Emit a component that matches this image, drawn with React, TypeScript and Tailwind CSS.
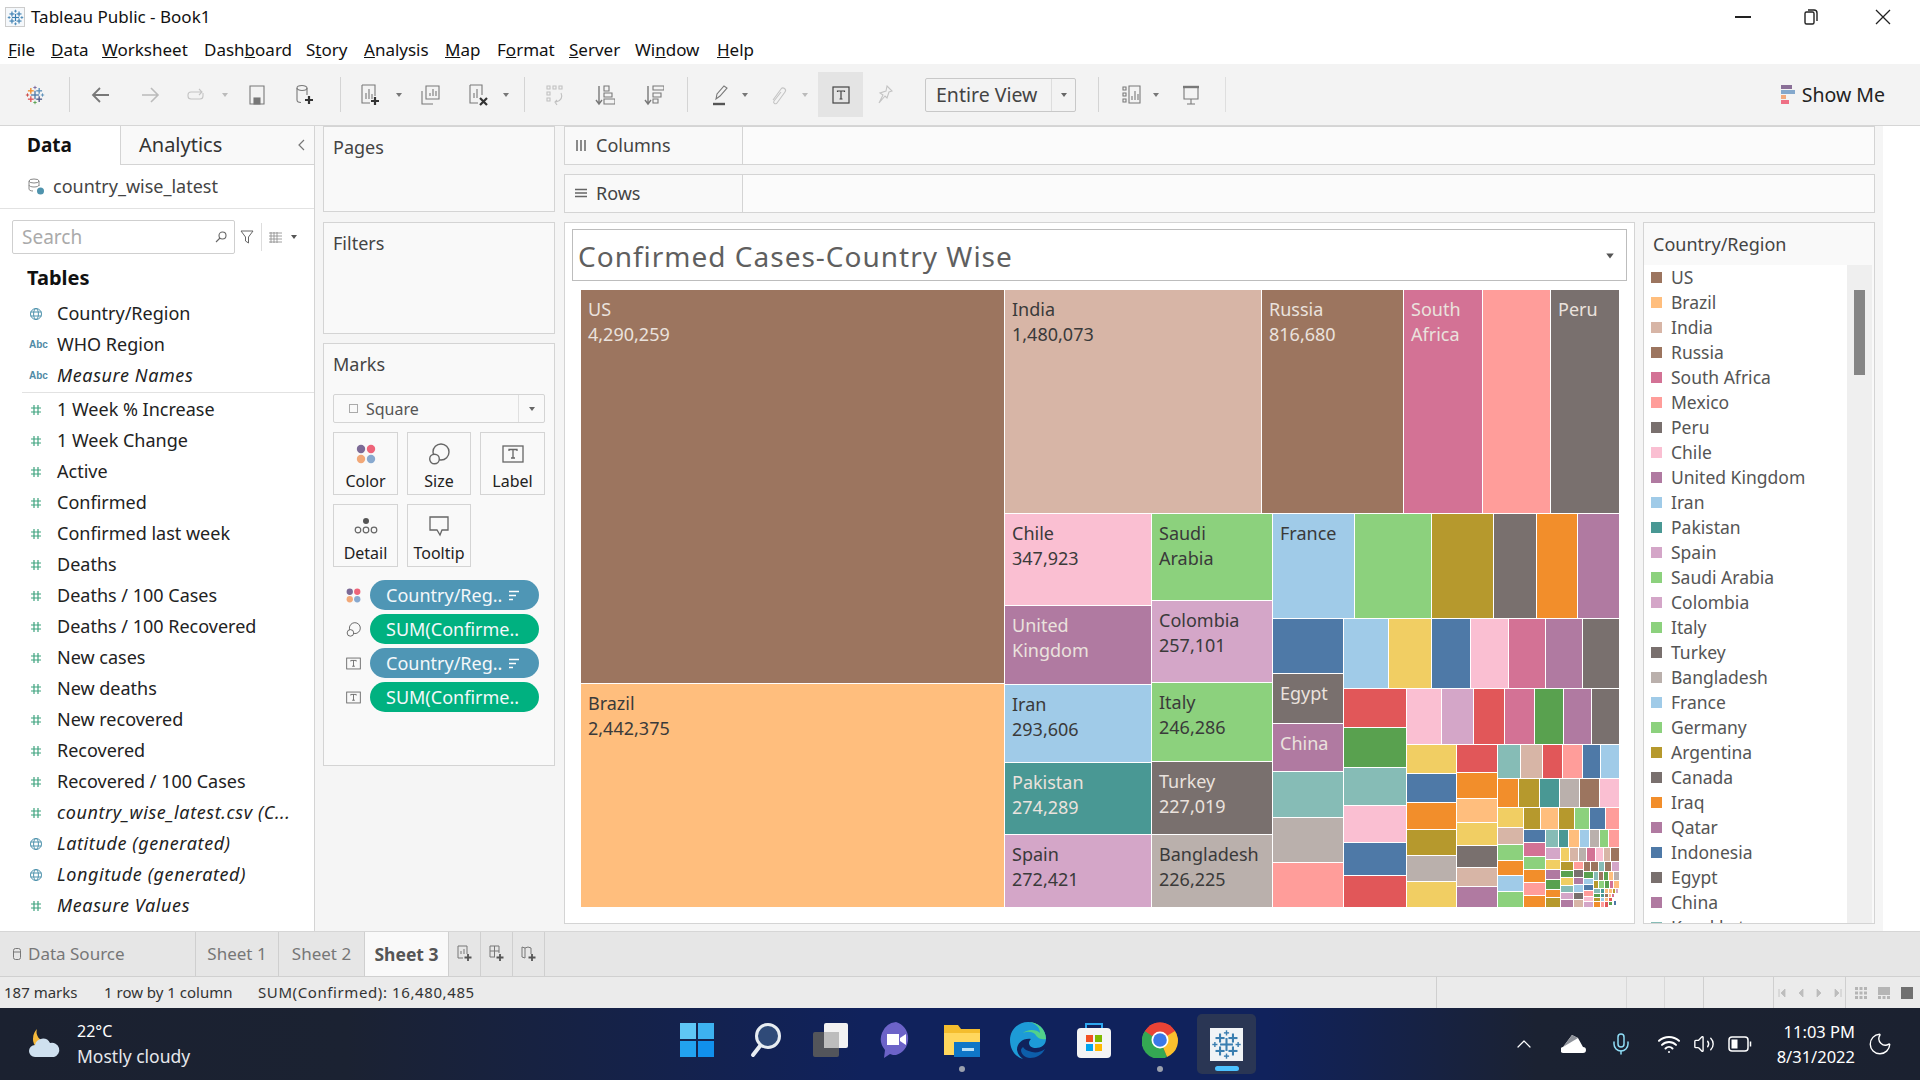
import React from "react";
import { ChevronUp, Mic, Wifi, Volume2, Moon } from "lucide-react";

const BR = "#9c755f", PE = "#ffbe7d", TA = "#d7b5a6", RO = "#d37295", SA = "#ff9d9a", GR = "#79706e", PI = "#fabfd2", PU = "#b07aa1", LB = "#a0cbe8", DT = "#499894", LP = "#d4a6c8", LG = "#8cd17d", OL = "#b6992d", OR = "#f28e2b", BL = "#4e79a7", TE = "#86bcb6", SI = "#bab0ac", RE = "#e15759", GN = "#59a14f", YE = "#f1ce63";

type Cell = [number, number, number, number, string, string?, string?, boolean?];
const cells: Cell[] = [
  [581, 290, 1004, 683, BR, "US", "4,290,259", true],
  [581, 684, 1004, 907, PE, "Brazil", "2,442,375"],
  [1005, 290, 1261, 513, TA, "India", "1,480,073"],
  [1262, 290, 1403, 513, BR, "Russia", "816,680", true],
  [1404, 290, 1482, 513, RO, "South", "Africa", true],
  [1483, 290, 1550, 513, SA],
  [1551, 290, 1619, 513, GR, "Peru", undefined, true],
  [1005, 514, 1151, 605, PI, "Chile", "347,923"],
  [1005, 606, 1151, 684, PU, "United", "Kingdom", true],
  [1005, 685, 1151, 762, LB, "Iran", "293,606"],
  [1005, 763, 1151, 834, DT, "Pakistan", "274,289", true],
  [1005, 835, 1151, 907, LP, "Spain", "272,421"],
  [1152, 514, 1272, 600, LG, "Saudi", "Arabia"],
  [1152, 601, 1272, 682, LP, "Colombia", "257,101"],
  [1152, 683, 1272, 761, LG, "Italy", "246,286"],
  [1152, 762, 1272, 834, GR, "Turkey", "227,019", true],
  [1152, 835, 1272, 907, SI, "Bangladesh", "226,225"],
  [1273, 514, 1354, 618, LB, "France"],
  [1355, 514, 1431, 618, LG],
  [1432, 514, 1493, 618, OL],
  [1494, 514, 1536, 618, GR],
  [1537, 514, 1577, 618, OR],
  [1578, 514, 1619, 618, PU],
  [1273, 619, 1343, 673, BL],
  [1273, 674, 1343, 723, GR, "Egypt", undefined, true],
  [1273, 724, 1343, 771, PU, "China", undefined, true],
  [1273, 772, 1343, 817, TE],
  [1273, 818, 1343, 862, SI],
  [1273, 863, 1343, 907, SA],
  [1344, 619, 1388, 688, LB],
  [1389, 619, 1431, 688, YE],
  [1432, 619, 1470, 688, BL],
  [1471, 619, 1508, 688, PI],
  [1509, 619, 1545, 688, RO],
  [1546, 619, 1582, 688, PU],
  [1583, 619, 1619, 688, GR],
  [1344, 689, 1406, 727, RE],
  [1344, 728, 1406, 767, GN],
  [1344, 768, 1406, 805, TE],
  [1344, 806, 1406, 842, PI],
  [1344, 843, 1406, 875, BL],
  [1344, 876, 1406, 907, RE],
  [1407, 689, 1441, 744, PI],
  [1442, 689, 1473, 744, LP],
  [1474, 689, 1504, 744, RE],
  [1505, 689, 1534, 744, RO],
  [1535, 689, 1563, 744, GN],
  [1564, 689, 1591, 744, PU],
  [1592, 689, 1619, 744, GR],
  [1407, 745, 1456, 773, YE],
  [1407, 774, 1456, 802, BL],
  [1407, 803, 1456, 829, OR],
  [1407, 830, 1456, 855, OL],
  [1407, 856, 1456, 881, SI],
  [1407, 882, 1456, 907, YE],
  [1457, 745, 1497, 772, RE],
  [1457, 773, 1497, 798, OR],
  [1457, 799, 1497, 822, PE],
  [1457, 823, 1497, 845, YE],
  [1457, 846, 1497, 867, GR],
  [1457, 868, 1497, 886, TA],
  [1457, 887, 1497, 907, PU],
  [1498, 745, 1520, 778, TE],
  [1521, 745, 1542, 778, TA],
  [1543, 745, 1562, 778, RE],
  [1563, 745, 1582, 778, SA],
  [1583, 745, 1600, 778, BL],
  [1601, 745, 1619, 778, LB],
  [1498, 779, 1518, 807, OR],
  [1519, 779, 1539, 807, OL],
  [1540, 779, 1559, 807, DT],
  [1560, 779, 1579, 807, SI],
  [1580, 779, 1599, 807, BR],
  [1600, 779, 1619, 807, PI],
  [1498, 808, 1523, 827, YE],
  [1498, 828, 1523, 844, TA],
  [1498, 845, 1523, 860, LG],
  [1498, 861, 1523, 875, OR],
  [1498, 876, 1523, 891, LB],
  [1498, 892, 1523, 907, LG],
  [1524, 808, 1540, 829, OL],
  [1541, 808, 1558, 829, PE],
  [1559, 808, 1574, 829, OL],
  [1575, 808, 1589, 829, LG],
  [1590, 808, 1605, 829, BL],
  [1606, 808, 1619, 829, SA],
  [1524, 830, 1545, 842, BL],
  [1524, 843, 1545, 856, RO],
  [1524, 857, 1545, 869, LG],
  [1524, 870, 1545, 882, OR],
  [1524, 883, 1545, 895, SA],
  [1524, 896, 1545, 907, OR],
  [1546, 830, 1558, 847, TE],
  [1559, 830, 1568, 847, DT],
  [1569, 830, 1579, 847, PE],
  [1580, 830, 1589, 847, LB],
  [1590, 830, 1599, 847, SI],
  [1600, 830, 1608, 847, LG],
  [1609, 830, 1619, 847, SA],
  [1546, 848, 1560, 859, LP],
  [1546, 860, 1560, 869, YE],
  [1546, 870, 1560, 879, PU],
  [1546, 880, 1560, 889, GN],
  [1546, 890, 1560, 897, OR],
  [1546, 898, 1560, 907, OL],
  [1561, 848, 1569, 861, YE],
  [1570, 848, 1578, 861, TA],
  [1579, 848, 1586, 861, SI],
  [1587, 848, 1595, 861, RO],
  [1596, 848, 1603, 861, PI],
  [1604, 848, 1610, 861, TA],
  [1611, 848, 1619, 861, BR],
  [1561, 862, 1573, 870, OL],
  [1561, 871, 1573, 877, GN],
  [1561, 878, 1573, 885, YE],
  [1561, 886, 1573, 892, TE],
  [1561, 893, 1573, 899, LP],
  [1561, 900, 1573, 907, PU],
  [1574, 862, 1583, 869, SA],
  [1574, 870, 1583, 877, GR],
  [1574, 878, 1583, 884, PU],
  [1574, 885, 1583, 892, LB],
  [1574, 893, 1583, 899, GR],
  [1574, 900, 1583, 907, TA],
  [1584, 862, 1590, 871, BR],
  [1591, 862, 1598, 871, BR],
  [1599, 862, 1604, 871, TE],
  [1605, 862, 1611, 871, BR],
  [1612, 862, 1619, 871, LP],
  [1584, 872, 1593, 878, GN],
  [1584, 879, 1593, 884, LB],
  [1584, 885, 1593, 890, BL],
  [1584, 891, 1593, 896, SA],
  [1584, 897, 1593, 901, PI],
  [1584, 902, 1593, 907, LP],
  [1594, 872, 1598, 880, TE],
  [1599, 872, 1603, 880, BR],
  [1604, 872, 1608, 880, GN],
  [1609, 872, 1613, 880, PE],
  [1614, 872, 1619, 880, SI],
  [1594, 881, 1598, 888, OL],
  [1599, 881, 1604, 888, LG],
  [1605, 881, 1609, 888, GN],
  [1610, 881, 1613, 888, RO],
  [1614, 881, 1619, 888, PE],
  [1594, 889, 1600, 893, TE],
  [1601, 889, 1604, 893, DT],
  [1605, 889, 1608, 893, PE],
  [1609, 889, 1612, 893, PE],
  [1613, 889, 1615, 893, OL],
  [1616, 889, 1618, 893, LP],
  [1594, 894, 1600, 897, GN],
  [1601, 894, 1604, 897, DT],
  [1605, 894, 1608, 897, BR],
  [1609, 894, 1611, 897, PE],
  [1612, 894, 1614, 897, RO],
  [1594, 898, 1600, 901, OL],
  [1601, 898, 1604, 901, LB],
  [1605, 898, 1608, 901, PE],
  [1609, 898, 1612, 901, RE],
  [1594, 902, 1600, 907, OR],
  [1601, 902, 1604, 907, SA],
  [1605, 902, 1608, 907, RE],
  [1609, 902, 1612, 905, GN],
  [1614, 901, 1616, 905, BL],
];

function Treemap() {
  return (
    <svg viewBox="581 290 1038 617" className="block h-[617px] w-[1038px] shrink-0">
      {cells.map((c, i) => (
        <g key={i}>
          <rect x={c[0]} y={c[1]} width={c[2] - c[0]} height={c[3] - c[1]} fill={c[4]} />
          {c[5] && (
            <text x={c[0] + 7} y={c[1] + 26} fontSize="18" fill={c[7] ? "#eae2dd" : "#3a3a3a"}>
              {c[5]}
            </text>
          )}
          {c[6] && (
            <text x={c[0] + 7} y={c[1] + 51} fontSize="18" fill={c[7] ? "#eae2dd" : "#3a3a3a"}>
              {c[6]}
            </text>
          )}
        </g>
      ))}
    </svg>
  );
}

function TableauMark({ size = 22, mono }: { size?: number; mono?: boolean }) {
  const colors = mono
    ? ["#3a7eb0", "#3a7eb0", "#3a7eb0", "#3a7eb0", "#3a7eb0", "#3a7eb0", "#3a7eb0"]
    : ["#f28e2b", "#5b8fb9", "#e15759", "#4e5a8a", "#7b6aa0", "#59a14f", "#c9453f"];
  const pts: [number, number, number, string][] = [
    [12, 12, 5, mono ? colors[0] : "#4e79a7"],
    [7, 7, 3.5, colors[0]],
    [17, 7, 3.5, colors[1]],
    [7, 17, 3.5, colors[2]],
    [17, 17, 3.5, colors[3]],
    [12, 3, 2, colors[4]],
    [12, 21, 2, colors[5]],
    [3, 12, 2, colors[6]],
    [21, 12, 2, colors[1]],
  ];
  return (
    <svg width={size} height={size} viewBox="0 0 24 24">
      {pts.map(([x, y, r, col], i) => (
        <g key={i} stroke={col} strokeWidth={r > 3 ? 1.6 : 1.1}>
          <line x1={x - r} y1={y} x2={x + r} y2={y} />
          <line x1={x} y1={y - r} x2={x} y2={y + r} />
        </g>
      ))}
    </svg>
  );
}

function Caret({ c = "#777", cls = "" }: { c?: string; cls?: string }) {
  return (
    <svg width="8" height="6" viewBox="0 0 8 6" className={`shrink-0 ${cls}`}>
      <path d="M1 1h6L4 5z" fill={c} />
    </svg>
  );
}

const Sep = ({ cls }: { cls: string }) => <div className={`h-[35px] w-px shrink-0 bg-[#d4d4d4] ${cls}`} />;

function I({ cls, children }: { cls: string; children: React.ReactNode }) {
  return (
    <svg width="20" height="22" viewBox="0 0 20 22" fill="none" stroke="#787878" strokeWidth="1.1" className={`shrink-0 ${cls}`}>
      {children}
    </svg>
  );
}

const menu: [string, string, string, string][] = [
  ["", "F", "ile", "w-[43px]"],
  ["", "D", "ata", "w-[51px]"],
  ["", "W", "orksheet", "w-[102px]"],
  ["Dash", "b", "oard", "w-[102px]"],
  ["S", "t", "ory", "w-[58px]"],
  ["", "A", "nalysis", "w-[81px]"],
  ["", "M", "ap", "w-[52px]"],
  ["F", "o", "rmat", "w-[72px]"],
  ["", "S", "erver", "w-[66px]"],
  ["Wi", "n", "dow", "w-[82px]"],
  ["", "H", "elp", "w-[50px]"],
];

function TitleBar() {
  return (
    <div className="flex h-[34px] shrink-0 items-center bg-white pl-[5px] text-[17px] text-[#111]">
      <div className="flex h-[20px] w-[20px] shrink-0 items-center justify-center border border-[#ccc] bg-[#f5f8fb]">
        <TableauMark size={17} mono />
      </div>
      <span className="ml-[6px]">Tableau Public - Book1</span>
      <div className="ml-auto flex items-center">
        <div className="h-[1.5px] w-[16px] bg-[#222]" />
        <svg width="16" height="18" viewBox="0 0 16 18" fill="none" stroke="#222" strokeWidth="1.4" className="ml-[52px]">
          <rect x="2" y="4" width="9" height="12" rx="1.5" />
          <path d="M5 2h6a3 3 0 0 1 3 3v8" />
        </svg>
        <svg width="16" height="16" viewBox="0 0 16 16" stroke="#222" strokeWidth="1.3" className="ml-[56px] mr-[29px]">
          <path d="M1 1l14 14M15 1L1 15" />
        </svg>
      </div>
    </div>
  );
}

function MenuBar() {
  return (
    <div className="flex h-[30px] shrink-0 items-center bg-white pl-[8px] pt-[2px] text-[17px] text-[#111]">
      {menu.map(([a, b, c, w]) => (
        <span key={a + b + c} className={`shrink-0 ${w}`}>
          {a}
          <span className="underline">{b}</span>
          {c}
        </span>
      ))}
    </div>
  );
}

function Toolbar() {
  return (
    <div className="flex h-[61px] shrink-0 items-center bg-[#f3f3f3]">
      <div className="ml-[25px] shrink-0">
        <TableauMark size={20} />
      </div>
      <Sep cls="ml-[24px]" />
      <I cls="ml-[21px]"><path d="M18 11H3M9 4l-7 7 7 7" strokeWidth="1.8" /></I>
      <I cls="ml-[29px]"><path d="M2 11h15M11 4l7 7-7 7" stroke="#bbb" strokeWidth="1.6" /></I>
      <I cls="ml-[26px]"><path d="M17 9v3a3 3 0 0 1-3 3H5a3 3 0 0 1-3-3v-1a3 3 0 0 1 3-3h11M13 5l3 3-3 3" stroke="#c4c4c4" /></I>
      <Caret c="#bbb" cls="ml-[15px]" />
      <I cls="ml-[18px]"><path d="M3 2h14v18H3z" /><rect x="7" y="14" width="6" height="6" fill="#777" /></I>
      <I cls="ml-[28px]"><ellipse cx="7" cy="4" rx="5" ry="2.5" /><path d="M2 4v12c0 1.5 2 2.5 4 2.5M12 4v7" /><path d="M14 12v8M10 16h8" stroke="#333" strokeWidth="2.2" /></I>
      <Sep cls="ml-[25px]" />
      <I cls="ml-[19px]"><path d="M2 1h13v11M2 1v18h8" /><path d="M6 15V9M9 15V5M12 15v-5" /><path d="M15 13v8M11 17h8" stroke="#333" strokeWidth="2.2" /></I>
      <Caret cls="ml-[15px]" />
      <I cls="ml-[17px]"><path d="M6 2h13v13H6z" /><path d="M2 7v13h11" /><path d="M10 12V9M13 12V5M16 12V7" /></I>
      <I cls="ml-[28px]"><path d="M2 1h12v10M2 1v18h8" /><path d="M6 14V9M9 14V5" /><path d="M12 14l7 7M19 14l-7 7" stroke="#333" strokeWidth="2.2" /></I>
      <Caret cls="ml-[14px]" />
      <Sep cls="ml-[14px]" />
      <I cls="ml-[20px]"><g stroke="#c0c0c0"><path d="M2 2h3v3H2zM8 2h3v3H8zM14 2h3v3h-3zM2 8h3v3H2zM2 14h3v3H2zM16 9c2 4 0 8-5 9M12 16l-2 2 2 3" /></g></I>
      <I cls="ml-[30px]"><path d="M4 2v17M1 16l3 4 3-4" strokeWidth="1.4" /><path d="M9 2h5v5H9zM9 9h8v4H9zM9 15h11v5H9z" /></I>
      <I cls="ml-[29px]"><path d="M4 2v17M1 16l3 4 3-4" strokeWidth="1.4" /><path d="M9 2h11v4H9zM9 9h8v4H9zM9 15h5v4H9z" /></I>
      <Sep cls="ml-[23px]" />
      <I cls="ml-[22px]"><path d="M6 15l1-5 7-8 3 2-7 8z" /><path d="M3 20h12" stroke="#555" strokeWidth="2.4" /></I>
      <Caret cls="ml-[11px]" />
      <I cls="ml-[19px]"><path d="M5 16l8-11a2.5 2.5 0 0 1 4 3L9 19a1.6 1.6 0 0 1-3-2l7-9" stroke="#c4c4c4" /></I>
      <Caret c="#bbb" cls="ml-[13px]" />
      <div className="ml-[9px] flex h-[45px] w-[45px] shrink-0 items-center justify-center bg-[#e4e4e4]">
        <svg width="18" height="18" viewBox="0 0 18 18" fill="none" stroke="#444" strokeWidth="1.2">
          <rect x="1" y="1" width="16" height="16" />
          <path d="M5.5 6V5h7v1M9 5v8M7.5 13h3" />
        </svg>
      </div>
      <I cls="ml-[12px]"><path d="M12 2l5 5-3 1-2 6-2-2-6 7 4-8-3-2 6-2z" stroke="#c4c4c4" /></I>
      <div className="ml-[30px] flex h-[34px] w-[151px] shrink-0 items-center rounded-[2px] border border-[#c8c8c8] text-[19.5px] text-[#444]">
        <span className="w-[125px] pl-[10px]">Entire View</span>
        <div className="flex h-full flex-1 items-center justify-center border-l border-[#ddd]">
          <Caret c="#666" />
        </div>
      </div>
      <Sep cls="ml-[22px]" />
      <I cls="ml-[22px]"><path d="M2 3h3v3H2zM2 9h3v3H2zM2 15h3v3H2zM8 2h11v17H8z" /><path d="M11 16v-4M14 16V7M17 16v-6" /></I>
      <Caret cls="ml-[11px]" />
      <I cls="ml-[21px]"><path d="M3 3h14v12H3zM10 15v5M6 20h8" /><path d="M2 3h16" strokeWidth="2.4" /></I>
      <Sep cls="ml-[24px] bg-[#dedede]" />
      <div className="ml-auto mr-[35px] flex items-center text-[19.5px] text-[#222]">
        <div className="mr-[7px] flex w-[14px] flex-col">
          <div className="h-[4px] w-[11px] bg-[#8a6f97]" />
          <div className="mt-px h-[4px] w-[14px] bg-[#84a8cc]" />
          <div className="mt-px h-[4px] w-[5px] bg-[#f3a97c]" />
          <div className="mt-px h-[4px] w-[8px] bg-[#ee6f84]" />
        </div>
        Show Me
      </div>
    </div>
  );
}

function Globe() {
  return (
    <svg width="14" height="14" viewBox="0 0 14 14" fill="none" stroke="#4f93ad" strokeWidth="1" className="shrink-0">
      <circle cx="7" cy="7" r="5.5" />
      <ellipse cx="7" cy="7" rx="2.4" ry="5.5" />
      <path d="M1.5 5h11M1.5 9h11" />
    </svg>
  );
}
function Abc() {
  return <span className="w-[20px] shrink-0 text-[10px] font-bold text-[#4f8aa5] font-['Liberation_Sans',sans-serif]">Abc</span>;
}
function Hash() {
  return (
    <svg width="14" height="14" viewBox="0 0 14 14" stroke="#3fa37f" strokeWidth="1.2" className="shrink-0">
      <path d="M5 2v10M9 2v10M2 5h10M2 9h10" />
    </svg>
  );
}

type F = [string, "g" | "a" | "h", boolean?];
const dims: F[] = [
  ["Country/Region", "g"],
  ["WHO Region", "a"],
  ["Measure Names", "a", true],
];
const measures: F[] = [
  ["1 Week % Increase", "h"],
  ["1 Week Change", "h"],
  ["Active", "h"],
  ["Confirmed", "h"],
  ["Confirmed last week", "h"],
  ["Deaths", "h"],
  ["Deaths / 100 Cases", "h"],
  ["Deaths / 100 Recovered", "h"],
  ["New cases", "h"],
  ["New deaths", "h"],
  ["New recovered", "h"],
  ["Recovered", "h"],
  ["Recovered / 100 Cases", "h"],
  ["country_wise_latest.csv (C...", "h", true],
  ["Latitude (generated)", "g", true],
  ["Longitude (generated)", "g", true],
  ["Measure Values", "h", true],
];

function Field({ f }: { f: F }) {
  return (
    <div className="flex h-[31px] items-center pl-[29px] text-[18px] text-[#222]">
      <div className="flex w-[28px] shrink-0 items-center">
        {f[1] === "g" ? <Globe /> : f[1] === "a" ? <Abc /> : <Hash />}
      </div>
      <span className={f[2] ? "italic tracking-[0.6px]" : ""}>{f[0]}</span>
    </div>
  );
}

function DataPanel() {
  return (
    <aside className="flex w-[315px] shrink-0 flex-col overflow-hidden border-r border-[#d4d4d4] bg-white">
      <div className="flex h-[39px] shrink-0 items-center">
        <div className="w-[120px] pl-[27px] text-[19px] font-bold text-[#111]">Data</div>
        <div className="flex h-full flex-1 items-center border-b border-l border-[#d4d4d4] bg-[#f9f9f9] pl-[18px] text-[20px] text-[#333]">
          Analytics
          <svg width="8" height="12" viewBox="0 0 8 12" fill="none" stroke="#777" strokeWidth="1.2" className="ml-auto mr-[9px]">
            <path d="M7 1L2 6l5 5" />
          </svg>
        </div>
      </div>
      <div className="flex h-[44px] shrink-0 items-center border-b border-[#e2e2e2] pl-[28px] text-[18px] text-[#444]">
        <svg width="17" height="18" viewBox="0 0 17 18" fill="none" stroke="#888" strokeWidth="1" className="mr-[8px]">
          <ellipse cx="6" cy="3" rx="5" ry="2" />
          <path d="M1 3v8c0 1 1.500 2 4 2M11 3v5M1 7c0 1 2 2 5 2s5-1 5-2" />
          <circle cx="12.500" cy="13" r="3.500" fill="#4f93ad" stroke="none" />
        </svg>
        country_wise_latest
      </div>
      <div className="mt-[11px] flex shrink-0 items-center pl-[12px]">
        <div className="flex h-[34px] w-[223px] items-center rounded-[2px] border border-[#cfcfcf] pl-[9px] pr-[7px] text-[19px] text-[#aaa]">
          Search
          <svg width="12" height="12" viewBox="0 0 12 12" fill="none" stroke="#666" strokeWidth="1.1" className="ml-auto">
            <circle cx="7.500" cy="4.500" r="3.500" />
            <path d="M5 7l-4 4" />
          </svg>
        </div>
        <svg width="14" height="14" viewBox="0 0 14 14" fill="none" stroke="#666" strokeWidth="1" className="ml-[5px]">
          <path d="M1 1h12L8.500 7v6l-3-2V7z" />
        </svg>
        <div className="ml-[7px] h-[28px] w-px bg-[#ddd]" />
        <svg width="13" height="11" viewBox="0 0 13 11" stroke="#888" strokeWidth="0.8" className="ml-[7px]">
          <path d="M0 1h13M0 4h13M0 7h13M0 10h13M2 0v11M5 0v11M8 0v11" />
        </svg>
        <Caret c="#555" cls="ml-[8px]" />
      </div>
      <div className="mt-[8px] flex h-[32px] shrink-0 items-center pl-[27px] text-[20px] font-bold text-[#111]">Tables</div>
      <div className="mt-[4px] ml-[22px] shrink-0 border-b border-[#e2e2e2] pb-[1px] [&>div]:-ml-[22px]">
        {dims.map((f) => <Field key={f[0]} f={f} />)}
      </div>
      <div className="mt-[1px] shrink-0">
        {measures.map((f) => <Field key={f[0]} f={f} />)}
      </div>
    </aside>
  );
}

function Dots({ s = 20 }: { s?: number }) {
  return (
    <svg width={s} height={s} viewBox="0 0 20 20">
      <circle cx="5" cy="5" r="4.200" fill="#7c6a96" />
      <circle cx="15" cy="5" r="4.200" fill="#ee6479" />
      <circle cx="5" cy="15" r="4.200" fill="#f2a878" />
      <circle cx="15" cy="15" r="4.200" fill="#88a9cf" />
    </svg>
  );
}
function SizeI({ s = 22 }: { s?: number }) {
  return (
    <svg width={s} height={s} viewBox="0 0 22 22" fill="none" stroke="#666" strokeWidth="1.4">
      <circle cx="13" cy="9" r="8" />
      <circle cx="6.500" cy="16" r="4.800" fill="#f9f9f9" />
    </svg>
  );
}
function TBox({ s = 22 }: { s?: number }) {
  return (
    <svg width={s} height={s} viewBox="0 0 22 22" fill="none" stroke="#666" strokeWidth="1.3">
      <rect x="1" y="3" width="20" height="16" />
      <path d="M7 8V6.500h8V8M11 6.500V15M9 15h4" />
    </svg>
  );
}

function MarkCard({ label, w, children }: { label: string; w: string; children: React.ReactNode }) {
  return (
    <div className={`flex h-[63px] flex-col items-center justify-between border border-[#d4d4d4] pb-[1px] pt-[9px] text-[16px] text-[#222] ${w}`}>
      <div className="flex h-[24px] items-center">{children}</div>
      <span>{label}</span>
    </div>
  );
}

function Pill({ text, c, sort, icon }: { text: string; c: string; sort?: boolean; icon: React.ReactNode }) {
  return (
    <div className="flex h-[30px] items-center">
      <div className="flex w-[37px] shrink-0 items-center justify-center pl-[3px]">{icon}</div>
      <div className={`flex h-[30px] w-[169px] items-center overflow-hidden whitespace-nowrap rounded-full pl-[16px] text-[18px] text-[#f4f8fa] ${c}`}>
        {text}
        {sort && (
          <svg width="12" height="11" viewBox="0 0 12 11" stroke="#fff" strokeWidth="1.500" className="ml-[6px] shrink-0">
            <path d="M1 1.500h10M1 5.500h7M1 9.500h4" />
          </svg>
        )}
      </div>
    </div>
  );
}

function Shelves() {
  return (
    <div className="ml-[8px] flex w-[232px] shrink-0 flex-col text-[18px] text-[#444]">
      <div className="h-[86px] shrink-0 border border-[#d4d4d4] bg-[#f9f9f9] pl-[9px] pt-[7px]">Pages</div>
      <div className="mt-[10px] h-[112px] shrink-0 border border-[#d4d4d4] bg-[#f9f9f9] pl-[9px] pt-[7px]">Filters</div>
      <div className="mt-[9px] flex h-[423px] shrink-0 flex-col border border-[#d4d4d4] bg-[#f9f9f9] px-[9px] pt-[7px]">
        <div>Marks</div>
        <div className="mt-[16px] flex h-[29px] items-center rounded-[2px] border border-[#d4d4d4] text-[16px] text-[#555]">
          <div className="flex h-full flex-1 items-center pl-[15px]">
            <div className="mr-[8px] h-[9px] w-[9px] border border-[#aaa]" />
            Square
          </div>
          <div className="flex h-full w-[26px] items-center justify-center border-l border-[#e0e0e0]">
            <Caret c="#666" />
          </div>
        </div>
        <div className="mt-[9px] flex gap-[9px]">
          <MarkCard label="Color" w="w-[65px]"><Dots /></MarkCard>
          <MarkCard label="Size" w="w-[64px]"><SizeI /></MarkCard>
          <MarkCard label="Label" w="w-[65px]"><TBox /></MarkCard>
        </div>
        <div className="mt-[9px] flex gap-[9px]">
          <MarkCard label="Detail" w="w-[65px]">
            <svg width="24" height="20" viewBox="0 0 24 20" fill="none" stroke="#666" strokeWidth="1.200">
              <circle cx="12" cy="5" r="3" fill="#555" stroke="none" />
              <circle cx="4" cy="14" r="2.800" />
              <circle cx="12" cy="14" r="2.800" />
              <circle cx="20" cy="14" r="2.800" />
            </svg>
          </MarkCard>
          <MarkCard label="Tooltip" w="w-[64px]">
            <svg width="22" height="22" viewBox="0 0 22 22" fill="none" stroke="#666" strokeWidth="1.300">
              <path d="M2 2h18v13h-6l-2 5-3-5H2z" />
            </svg>
          </MarkCard>
        </div>
        <div className="mt-[13px] flex flex-col gap-[4px]">
          <Pill text="Country/Reg.." c="bg-[#4f96b5]" sort icon={<Dots s={15} />} />
          <Pill text="SUM(Confirme.." c="bg-[#00b180]" icon={<SizeI s={15} />} />
          <Pill text="Country/Reg.." c="bg-[#4f96b5]" sort icon={<TBox s={15} />} />
          <Pill text="SUM(Confirme.." c="bg-[#00b180]" icon={<TBox s={15} />} />
        </div>
      </div>
    </div>
  );
}

const legend: [string, string][] = [
  ["US", BR], ["Brazil", PE], ["India", TA], ["Russia", BR], ["South Africa", RO], ["Mexico", SA], ["Peru", GR], ["Chile", PI], ["United Kingdom", PU], ["Iran", LB], ["Pakistan", DT], ["Spain", LP], ["Saudi Arabia", LG], ["Colombia", LP], ["Italy", LG], ["Turkey", GR], ["Bangladesh", SI], ["France", LB], ["Germany", LG], ["Argentina", OL], ["Canada", GR], ["Iraq", OR], ["Qatar", PU], ["Indonesia", BL], ["Egypt", GR], ["China", PU], ["Kazakhstan", TE],
];

function Shelf({ name, icon }: { name: string; icon: React.ReactNode }) {
  return (
    <div className="flex h-[39px] shrink-0 border border-[#d4d4d4] bg-[#fbfbfb]">
      <div className="flex w-[178px] items-center border-r border-[#d4d4d4] bg-[#f9f9f9] pb-[1px] pl-[10px] text-[18px] text-[#444]">
        <div className="mr-[9px] w-[12px]">{icon}</div>
        {name}
      </div>
    </div>
  );
}

function MainArea() {
  return (
    <div className="ml-[9px] flex w-[1311px] shrink-0 flex-col">
      <Shelf name="Columns" icon={<svg width="12" height="11" viewBox="0 0 12 11" stroke="#666" strokeWidth="1.500"><path d="M2 0v11M6 0v11M10 0v11" /></svg>} />
      <div className="mt-[9px]">
        <Shelf name="Rows" icon={<svg width="12" height="10" viewBox="0 0 12 10" stroke="#666" strokeWidth="1.500"><path d="M0 1.500h12M0 5h12M0 8.500h12" /></svg>} />
      </div>
      <div className="mt-[9px] flex h-[702px] shrink-0 gap-[8px]">
        <div className="flex w-[1071px] shrink-0 flex-col border border-[#d4d4d4] bg-white px-[7px] pt-[6px]">
          <div className="flex h-[52px] shrink-0 items-center border border-[#bdbdbd] pl-[5px] pr-[12px] pt-[2px] text-[28px] tracking-[1px] text-[#5f5f5f]">
            Confirmed Cases-Country Wise
            <Caret c="#555" cls="ml-auto scale-125" />
          </div>
          <div className="ml-[9px] mt-[9px]">
            <Treemap />
          </div>
        </div>
        <div className="flex w-[232px] shrink-0 flex-col overflow-hidden border border-[#d4d4d4] bg-[#f9f9f9]">
          <div className="flex h-[42px] shrink-0 items-center pl-[9px] text-[18px] text-[#444]">Country/Region</div>
          <div className="flex min-h-0 flex-1">
            <div className="w-[203px] shrink-0 overflow-hidden bg-white pl-[7px]">
              {legend.map(([n, c]) => (
                <div key={n} className="flex h-[25px] items-center text-[17.5px] text-[#555]">
                  <div className="mr-[9px] h-[11px] w-[11px] shrink-0" style={{ backgroundColor: c }} />
                  {n}
                </div>
              ))}
            </div>
            <div className="w-[25px] shrink-0 bg-[#efefef] pl-[7px] pt-[25px]">
              <div className="h-[85px] w-[11px] bg-[#858585]" />
            </div>
          </div>
        </div>
      </div>
    </div>
  );
}

function SheetTabs() {
  return (
    <div className="flex h-[45px] shrink-0 border-b border-[#d0d0d0] bg-[#e6e6e6] text-[17px] text-[#777]">
      <div className="flex w-[196px] items-center border-r border-[#cfcfcf] pl-[13px]">
        <svg width="8" height="12" viewBox="0 0 8 12" fill="none" stroke="#777" className="mr-[7px]">
          <rect x="0.500" y="0.500" width="7" height="11" rx="2" />
          <path d="M0.500 4h7" />
        </svg>
        Data Source
      </div>
      <div className="flex w-[83px] items-center justify-center border-r border-[#cfcfcf]">Sheet 1</div>
      <div className="flex w-[85px] items-center justify-center">Sheet 2</div>
      <div className="flex w-[85px] items-center justify-center border-x border-[#cfcfcf] bg-[#f9f9f9] text-[17.5px] font-bold text-[#555]">Sheet 3</div>
      {[0, 1, 2].map((k) => (
        <div key={k} className="flex w-[32px] items-center justify-center border-r border-[#cfcfcf]">
          <svg width="16" height="18" viewBox="0 0 16 18" fill="none" stroke="#777" strokeWidth="1">
            {k === 0 && <path d="M1 1h9v8M1 1v12h5M4 9V6M7 9V4" />}
            {k === 1 && <path d="M1 1h9v7M1 1v11h5M1 6h9M5.500 1v11" />}
            {k === 2 && <path d="M1 2l3 1 3-1 3 1v6M1 2v10l3 1M4 3v10" />}
            <path d="M11 9v7M7.500 12.500h7" stroke="#555" strokeWidth="1.800" />
          </svg>
        </div>
      ))}
    </div>
  );
}

function StatusBar() {
  return (
    <div className="flex h-[31px] shrink-0 items-center bg-[#ebebeb] text-[15px] text-[#333]">
      <span className="w-[104px] shrink-0 pl-[4px]">187 marks</span>
      <span className="w-[154px] shrink-0">1 row by 1 column</span>
      <span className="w-[1178px] shrink-0 tracking-[0.6px]">SUM(Confirmed): 16,480,485</span>
      <div className="h-full w-[190px] shrink-0 border-l border-[#cfcfcf]" />
      <div className="h-full w-[38px] shrink-0 border-l border-[#d8d8d8]" />
      <div className="h-full w-[39px] shrink-0 border-l border-[#d8d8d8]" />
      <div className="h-full w-[70px] shrink-0 border-l border-[#cfcfcf]" />
      <div className="flex h-full w-[72px] shrink-0 items-center justify-center gap-[8px] border-l border-[#cfcfcf]">
        {["M1 1v8M7 1L3 5l4 4z", "M7 1L3 5l4 4z", "M3 1l4 4-4 4z", "M3 1l4 4-4 4zM9 1v8"].map((d) => (
          <svg key={d} width="10" height="10" viewBox="0 0 10 10" fill="#bdbdbd" stroke="#bdbdbd" strokeWidth="0.800"><path d={d} /></svg>
        ))}
      </div>
      <div className="flex h-full flex-1 items-center gap-[11px] border-l border-[#cfcfcf] pl-[9px]">
        <svg width="12" height="12" viewBox="0 0 12 12" fill="#b5b5b5"><path d="M0 0h3v3H0zM4.500 0h3v3h-3zM9 0h3v3H9zM0 4.500h3v3H0zM4.500 4.500h3v3h-3zM9 4.500h3v3H9zM0 9h3v3H0zM4.500 9h3v3h-3zM9 9h3v3H9z" /></svg>
        <svg width="12" height="12" viewBox="0 0 12 12" fill="#b5b5b5"><path d="M0 0h12v8H0zM0 9h3v3H0zM4.500 9h3v3h-3zM9 9h3v3H9z" /></svg>
        <svg width="12" height="12" viewBox="0 0 12 12" fill="#707070"><path d="M0 0h12v12H0z" /></svg>
      </div>
    </div>
  );
}

function Task({ cls, dot, children }: { cls: string; dot?: boolean; children: React.ReactNode }) {
  return (
    <div className={`flex h-[72px] w-[66px] shrink-0 flex-col items-center pt-[14px] ${cls}`}>
      <div className="flex h-[36px] items-center justify-center">{children}</div>
      {dot && <div className="mt-[8px] h-[6px] w-[6px] rounded-full bg-[#9aa0ad]" />}
    </div>
  );
}

function Taskbar() {
  return (
    <div className="flex h-[72px] shrink-0 items-center bg-[linear-gradient(90deg,#1b2130_0%,#1b2232_18%,#10225c_45%,#10225c_66%,#1b2232_80%,#1b2130_100%)] text-white">
      <svg width="34" height="34" viewBox="0 0 34 34" className="ml-[29px] shrink-0">
        <path d="M8 2a9 9 0 0 0 9 12 9 9 0 0 1-9 6 9 9 0 0 1-4-8c0-5 2-8 4-10z" fill="#f6b93b" />
        <path d="M6 30a6 6 0 0 1 0-12 8 8 0 0 1 15-2 7 7 0 0 1 4 14z" fill="#cfe0ef" />
      </svg>
      <div className="ml-[14px] w-[200px] shrink-0 text-[#e6e8ec]">
        <div className="text-[16px] leading-[25px] text-white">22°C</div>
        <div className="text-[17.5px] leading-[25px]">Mostly cloudy</div>
      </div>
      <Task cls="ml-[387px]">
        <svg width="36" height="36" viewBox="0 0 36 36">
          <path d="M1 1h16v16H1z" fill="#5fc6f5" /><path d="M19 1h16v16H19z" fill="#3db2f0" /><path d="M1 19h16v16H1z" fill="#22a2ef" /><path d="M19 19h16v16H19z" fill="#1190ec" />
        </svg>
      </Task>
      <Task cls="ml-[2px]">
        <svg width="34" height="36" viewBox="0 0 34 36" fill="#2f4a78" stroke="#e8edf2" strokeWidth="3">
          <circle cx="20" cy="14" r="11.500" />
          <path d="M12 24L5 33" fill="none" strokeLinecap="round" strokeWidth="4" />
        </svg>
      </Task>
      <Task cls="">
        <svg width="38" height="36" viewBox="0 0 38 36">
          <rect x="12" y="1" width="24" height="25" rx="2" fill="#f2f2f2" />
          <rect x="1" y="10" width="26" height="25" rx="2" fill="#5b5b5b" fillOpacity="0.9" />
          <rect x="12" y="10" width="15" height="16" fill="#bdbdbd" />
        </svg>
      </Task>
      <Task cls="-ml-px">
        <svg width="34" height="38" viewBox="0 0 34 38">
          <path d="M17 1a16 17 0 0 1 0 33c-2 0-4 0-6-1l-6 4 1-8A17 17 0 0 1 17 1z" fill="#6c63c8" />
          <path d="M8 13h12v11H8z" fill="#fff" /><path d="M21 17l6-4v11l-6-4z" fill="#fff" />
        </svg>
      </Task>
      <Task cls="" dot>
        <svg width="36" height="36" viewBox="0 0 36 36">
          <path d="M0 3h14l3 4h19v26H0z" fill="#f4bd2e" />
          <path d="M0 11h36v22H0z" fill="#ffd75e" />
          <path d="M10 20h26v15H10z" fill="#0f76c7" /><path d="M18 26h12v3H18z" fill="#b8e0f8" />
        </svg>
      </Task>
      <Task cls="">
        <svg width="38" height="38" viewBox="0 0 38 38">
          <path d="M19 1c10 0 18 7 18 17 0 6-5 9-10 9-4 0-7-2-7-5 0-2 1-3 2-4-8-1-14 4-14 11a14 14 0 0 0 6 9C6 36 1 28 1 19 1 9 9 1 19 1z" fill="#1d9bd7" />
          <path d="M37 18c0-10-8-17-18-17 5 0 12 4 12 11-3-3-12-5-18 1 3-3 9-3 13 0 2 3 4 6 11 5z" fill="#52d18a" />
          <path d="M12 29c0 4 4 8 9 8 6 0 12-3 15-9-4 3-9 4-13 3-5-1-8-3-9-5-1 1-2 2-2 3z" fill="#0d5eaa" />
        </svg>
      </Task>
      <Task cls="">
        <svg width="36" height="38" viewBox="0 0 36 38">
          <path d="M10 8V3h16v5" fill="none" stroke="#2ea7f0" strokeWidth="2" />
          <rect x="1" y="7" width="34" height="30" rx="4" fill="#f4f4f4" />
          <path d="M10 14h7v7h-7z" fill="#f25022" /><path d="M19 14h7v7h-7z" fill="#7fba00" /><path d="M10 23h7v7h-7z" fill="#00a4ef" /><path d="M19 23h7v7h-7z" fill="#ffb900" />
        </svg>
      </Task>
      <Task cls="" dot>
        <svg width="36" height="36" viewBox="0 0 36 36">
          <circle cx="18" cy="18" r="17.500" fill="#e94335" />
          <path d="M18 18L33 9a17.500 17.500 0 0 1-8 26z" fill="#fbc02d" />
          <path d="M18 18l7 17A17.500 17.500 0 0 1 3 9z" fill="#34a853" />
          <path d="M3 9a17.500 17.500 0 0 1 30 0H18a9 9 0 0 0-8 5z" fill="#e94335" />
          <circle cx="18" cy="18" r="8.500" fill="#fff" />
          <circle cx="18" cy="18" r="6.800" fill="#3b78e7" />
        </svg>
      </Task>
      <div className="relative ml-[4px] flex h-[60px] w-[59px] shrink-0 items-center justify-center rounded-[5px] bg-[#2a3654]">
        <div className="flex h-[33px] w-[33px] items-center justify-center bg-[#f0f3f6]">
          <TableauMark size={31} mono />
        </div>
        <div className="absolute bottom-[3px] h-[5px] w-[24px] rounded-full bg-[#4cc2ff]" />
      </div>
      <ChevronUp size={24} strokeWidth={1.200} className="ml-[256px] shrink-0 text-white" />
      <svg width="26" height="20" viewBox="0 0 26 20" className="ml-[25px] shrink-0">
        <path d="M3 19a3 3 0 0 1-1-6L11 1l6 3 5 9a3 3 0 0 1 0 6z" fill="#fff" />
        <path d="M2 13L11 1l6 3z" fill="#8f939b" />
      </svg>
      <Mic size={24} strokeWidth={1.500} className="ml-[22px] shrink-0 text-[#8fdcf5]" />
      <Wifi size={24} strokeWidth={2} className="ml-[24px] shrink-0" />
      <Volume2 size={22} strokeWidth={1.500} className="ml-[12px] shrink-0" />
      <svg width="24" height="20" viewBox="0 0 24 20" fill="none" stroke="#fff" strokeWidth="1.500" className="ml-[13px] shrink-0">
        <rect x="1" y="3" width="19" height="14" rx="3" />
        <rect x="3.500" y="5.500" width="6" height="9" fill="#fff" stroke="none" />
        <path d="M22.500 7.500v5" />
      </svg>
      <div className="ml-[23px] w-[80px] shrink-0 text-right text-[16.5px] leading-[25px]">
        <div>11:03 PM</div>
        <div>8/31/2022</div>
      </div>
      <Moon size={26} strokeWidth={1.300} className="ml-[12px] shrink-0" />
    </div>
  );
}

export default function App() {
  return (
    <div className="flex h-[1080px] w-[1920px] flex-col overflow-hidden bg-white font-['Noto_Sans',sans-serif]">
      <TitleBar />
      <MenuBar />
      <Toolbar />
      <div className="flex h-[807px] shrink-0 border-y border-[#d6d6d6] bg-[#f5f5f5]">
        <DataPanel />
        <Shelves />
        <MainArea />
        <div className="ml-[8px] flex-1 bg-white" />
      </div>
      <SheetTabs />
      <StatusBar />
      <Taskbar />
    </div>
  );
}
